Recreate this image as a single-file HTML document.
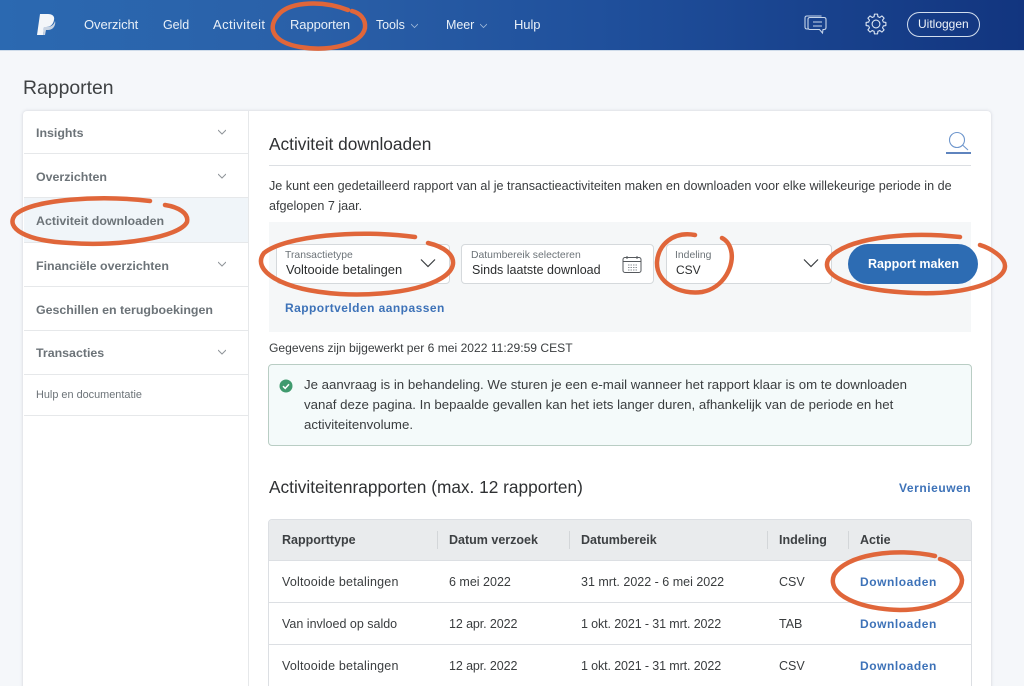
<!DOCTYPE html>
<html lang="nl"><head><meta charset="utf-8"><title>Rapporten</title>
<style>
*{box-sizing:border-box}
html,body{margin:0;padding:0;width:1024px;height:686px;overflow:hidden}
body{background:#f5f7fa;font-family:"Liberation Sans",sans-serif;color:#2c2e2f}
#w{position:absolute;left:0;top:0;width:1024px;height:686px;overflow:hidden;filter:blur(.3px)}
.t{position:absolute;white-space:nowrap;line-height:16px}
.b{position:absolute}
#top{left:0;top:0;width:1024px;height:51px;background:linear-gradient(90deg,#2b69b1 0%,#2a60a8 30%,#1f4f9b 60%,#12357f 100%);border-bottom:1px solid #cfdcea}
.n{color:#e9f0f8;font-size:13px;top:17px;letter-spacing:-.08px}
.c{width:7px;height:7px;position:absolute}
.s{color:#6c7378;font-size:12.4px;font-weight:bold}
.l{position:absolute;left:24px;width:225px;height:1px;background:#e6e8ea}
.fl{color:#6c7378;font-size:10.4px}
.fv{color:#2c2e2f;font-size:13px}
.f{position:absolute;top:244px;height:40px;background:#fff;border:1px solid #d5d9dc;border-radius:4px}
.p{font-size:12.5px;color:#3a3d3f}
.h{font-size:12.5px;font-weight:bold;color:#3d4043}
.a{font-size:12px;color:#3d72b8;letter-spacing:.55px;font-weight:bold}
.d{position:absolute;top:531px;width:1px;height:18px;background:#d3d6d9}
.r{position:absolute;left:269px;width:702px;height:1px;background:#dcdfe3}
</style></head><body><div id="w">
<div id="top" class="b"></div>
<svg class="b" style="left:36px;top:13px" width="21" height="24" viewBox="0 0 21 24"><path d="M4 1h8c4 0 7 2 6 6-1 5-4 7-8 7H8l-1 8H1z" fill="#f4f6f9"/><path d="M7 22l1-8h3c4 0 7-2 8-6 1 3-1 9-7 9h-2l-1 5z" fill="#c9d4e3"/></svg>
<span class="t n" style="left:84px">Overzicht</span>
<span class="t n" style="left:163px;font-size:12.500px">Geld</span>
<span class="t n" style="left:213px;letter-spacing:.4px">Activiteit</span>
<span class="t n" style="left:290px">Rapporten</span>
<span class="t n" style="left:376px;font-size:12.500px">Tools</span>
<svg class="c" style="left:411px;top:22px" viewBox="0 0 7 7"><path d="M0 2l3.500 3.500L7 2" fill="none" stroke="#9fb9da" stroke-width=".8"/></svg>
<span class="t n" style="left:446px;font-size:12.500px">Meer</span>
<svg class="c" style="left:480px;top:22px" viewBox="0 0 7 7"><path d="M0 2l3.500 3.500L7 2" fill="none" stroke="#9fb9da" stroke-width=".8"/></svg>
<span class="t n" style="left:514px">Hulp</span>
<svg class="b" style="left:804px;top:14px" width="23" height="21" viewBox="0 0 23 21" fill="none" stroke="#c7d6ea" stroke-width="1.100"><path d="M17 2.500V2H3Q1 2 1 4v9q0 2 2 2h1"/><path d="M6 3.500h14q2 0 2 2v8q0 2-2 2h-1l-.5 3.500-3-3.500H6q-2 0-2-2v-8q0-2 2-2z"/><path d="M9 8h9M9 12h9"/></svg>
<svg class="b" style="left:865px;top:13px" width="22" height="22" viewBox="-11 -11 22 22" fill="none" stroke="#dbe5f2" stroke-width="1.100" stroke-linejoin="round">
<defs><path id="g" d="M-2.870-6.930L-1.900-7.300-1.560-9.880H1.560L1.900-7.300 2.870-6.930"/></defs>
<circle r="3.900"/>
<use href="#g"/><use href="#g" transform="rotate(45)"/><use href="#g" transform="rotate(90)"/><use href="#g" transform="rotate(135)"/><use href="#g" transform="rotate(180)"/><use href="#g" transform="rotate(225)"/><use href="#g" transform="rotate(270)"/><use href="#g" transform="rotate(315)"/>
</svg>
<div class="b" style="left:907px;top:12px;width:73px;height:25px;border:1px solid #d2deee;border-radius:13px"></div>
<span class="t" style="left:918px;top:16px;font-size:12px;color:#eef3f9">Uitloggen</span>

<span class="t" style="left:23px;top:76px;font-size:19.400px;line-height:24px;color:#3f4244">Rapporten</span>
<div class="b" style="left:23px;top:111px;width:968px;height:590px;background:#fff;border-radius:4px;box-shadow:0 0 3px rgba(90,100,120,.25)"></div>
<div class="b" style="left:248px;top:111px;width:1px;height:575px;background:#e6e8ea"></div>
<div class="b" style="left:24px;top:198px;width:224px;height:44px;background:#f0f5f9"></div>
<span class="t s" style="left:36px;top:125px">Insights</span>
<span class="t s" style="left:36px;top:169px">Overzichten</span>
<span class="t s" style="left:36px;top:213px">Activiteit downloaden</span>
<span class="t s" style="left:36px;top:258px">Financiële overzichten</span>
<span class="t s" style="left:36px;top:302px">Geschillen en terugboekingen</span>
<span class="t s" style="left:36px;top:345px">Transacties</span>
<span class="t" style="left:36px;top:387px;font-size:10.900px;color:#6c7378">Hulp en documentatie</span>
<svg class="b" style="left:218px;top:128px" width="8" height="8" viewBox="0 0 8 8"><path d="M0 2l4 4 4-4" fill="none" stroke="#8f9499"/></svg>
<svg class="b" style="left:218px;top:172px" width="8" height="8" viewBox="0 0 8 8"><path d="M0 2l4 4 4-4" fill="none" stroke="#8f9499"/></svg>
<svg class="b" style="left:218px;top:260px" width="8" height="8" viewBox="0 0 8 8"><path d="M0 2l4 4 4-4" fill="none" stroke="#8f9499"/></svg>
<svg class="b" style="left:218px;top:348px" width="8" height="8" viewBox="0 0 8 8"><path d="M0 2l4 4 4-4" fill="none" stroke="#8f9499"/></svg>
<div class="l" style="top:153px"></div><div class="l" style="top:197px"></div><div class="l" style="top:242px"></div><div class="l" style="top:286px"></div><div class="l" style="top:330px"></div><div class="l" style="top:374px"></div><div class="l" style="top:415px"></div>

<span class="t" style="left:269px;top:134px;font-size:17.300px;line-height:20px;color:#2f3133">Activiteit downloaden</span>
<svg class="b" style="left:946px;top:130px" width="26" height="24" viewBox="0 0 26 24" fill="none"><circle cx="11" cy="10" r="7.500" stroke="#6f97cd" stroke-width="1.100"/><path d="M16.500 15l5.500 5" stroke="#6f97cd" stroke-width="1.100"/><path d="M0 23h25" stroke="#2a5ca8" stroke-width="1.500"/></svg>
<div class="r" style="top:165px"></div>
<span class="t p" style="left:269px;top:178px;font-size:12.600px">Je kunt een gedetailleerd rapport van al je transactieactiviteiten maken en downloaden voor elke willekeurige periode in de</span>
<span class="t p" style="left:269px;top:198px;font-size:12.600px">afgelopen 7 jaar.</span>
<div class="b" style="left:269px;top:222px;width:702px;height:110px;background:#f5f7f8"></div>
<div class="f" style="left:276px;width:174px"></div>
<span class="t fl" style="left:285px;top:248px">Transactietype</span>
<span class="t fv" style="left:286px;top:262px;font-size:12.900px">Voltooide betalingen</span>
<svg class="b" style="left:420px;top:258px" width="16" height="11" viewBox="0 0 16 11"><path d="M1 1.500l7 7 7-7" fill="none" stroke="#3a3d40" stroke-width="1.200"/></svg>
<div class="f" style="left:461px;width:193px"></div>
<span class="t fl" style="left:471px;top:248px">Datumbereik selecteren</span>
<span class="t fv" style="left:472px;top:262px;font-size:12.500px">Sinds laatste download</span>
<svg class="b" style="left:622px;top:255px" width="21" height="19" viewBox="0 0 21 19" fill="none" stroke="#55595d"><rect x="1" y="2.500" width="18" height="15" rx="2"/><path d="M1 6.500h18M5 1v3M15 1v3"/><path d="M6 10h9M6 12.500h9M6 15h9" stroke-dasharray="1.500 1" stroke="#8b9095"/></svg>
<div class="f" style="left:666px;width:166px"></div>
<span class="t fl" style="left:675px;top:248px">Indeling</span>
<span class="t fv" style="left:676px;top:262px;font-size:12px">CSV</span>
<svg class="b" style="left:803px;top:258px" width="16" height="11" viewBox="0 0 16 11"><path d="M1 1.500l7 7 7-7" fill="none" stroke="#3a3d40" stroke-width="1.200"/></svg>
<div class="b" style="left:848px;top:244px;width:130px;height:40px;background:#2d6cb3;border-radius:20px"></div>
<span class="t" style="left:868px;top:256px;font-size:12.500px;font-weight:bold;color:#fff">Rapport maken</span>
<span class="t a" style="left:285px;top:300px;letter-spacing:.45px">Rapportvelden aanpassen</span>
<span class="t p" style="left:269px;top:340px;font-size:12.100px">Gegevens zijn bijgewerkt per 6 mei 2022 11:29:59 CEST</span>
<div class="b" style="left:268px;top:364px;width:704px;height:82px;background:#f4fafa;border:1px solid #b9cdc4;border-radius:4px"></div>
<svg class="b" style="left:279px;top:379px" width="14" height="14" viewBox="0 0 14 14"><circle cx="7" cy="7" r="6.500" fill="#3f9a6e"/><path d="M4 7.200l2.200 2.200L10 5.200" fill="none" stroke="#fff" stroke-width="1.500"/></svg>
<span class="t p" style="left:304px;top:377px;font-size:13.250px">Je aanvraag is in behandeling. We sturen je een e-mail wanneer het rapport klaar is om te downloaden</span>
<span class="t p" style="left:304px;top:397px;font-size:13.250px">vanaf deze pagina. In bepaalde gevallen kan het iets langer duren, afhankelijk van de periode en het</span>
<span class="t p" style="left:304px;top:417px;font-size:13.250px">activiteitenvolume.</span>

<span class="t" style="left:269px;top:477px;font-size:17.270px;line-height:20px;color:#2f3133">Activiteitenrapporten (max. 12 rapporten)</span>
<span class="t a" style="left:899px;top:480px">Vernieuwen</span>

<div class="b" style="left:268px;top:519px;width:704px;height:190px;border:1px solid #dcdfe3;border-radius:4px 4px 0 0"></div>
<div class="b" style="left:269px;top:520px;width:702px;height:40px;background:#e9ebed;border-radius:3px 3px 0 0"></div>
<div class="r" style="top:560px"></div><div class="r" style="top:602px"></div><div class="r" style="top:644px"></div>
<div class="d" style="left:437px"></div><div class="d" style="left:569px"></div><div class="d" style="left:767px"></div><div class="d" style="left:848px"></div>
<span class="t h" style="left:282px;top:532px">Rapporttype</span>
<span class="t h" style="left:449px;top:532px">Datum verzoek</span>
<span class="t h" style="left:581px;top:532px">Datumbereik</span>
<span class="t h" style="left:779px;top:532px">Indeling</span>
<span class="t h" style="left:860px;top:532px">Actie</span>
<span class="t p" style="left:282px;top:574px;letter-spacing:.2px">Voltooide betalingen</span><span class="t p" style="left:449px;top:574px">6 mei 2022</span><span class="t p" style="left:581px;top:574px">31 mrt. 2022 - 6 mei 2022</span><span class="t p" style="left:779px;top:574px">CSV</span><span class="t a" style="left:860px;top:574px">Downloaden</span>
<span class="t p" style="left:282px;top:616px">Van invloed op saldo</span><span class="t p" style="left:449px;top:616px;letter-spacing:-.1px">12 apr. 2022</span><span class="t p" style="left:581px;top:616px;letter-spacing:-.12px">1 okt. 2021 - 31 mrt. 2022</span><span class="t p" style="left:779px;top:616px">TAB</span><span class="t a" style="left:860px;top:616px">Downloaden</span>
<span class="t p" style="left:282px;top:658px;letter-spacing:.2px">Voltooide betalingen</span><span class="t p" style="left:449px;top:658px;letter-spacing:-.1px">12 apr. 2022</span><span class="t p" style="left:581px;top:658px;letter-spacing:-.12px">1 okt. 2021 - 31 mrt. 2022</span><span class="t p" style="left:779px;top:658px">CSV</span><span class="t a" style="left:860px;top:658px">Downloaden</span>

<svg class="b" style="left:0;top:0" width="1024" height="686" viewBox="0 0 1024 686" fill="none" stroke="#e0663a" stroke-width="4.500" stroke-linecap="round">
<path d="M348 10C322 0 292 2 280 13C266 27 272 42 300 47C330 52 362 44 365 28C366 19 360 13 352 11"/>
<path d="M150 201C100 195 32 199 15 215C5 228 25 241 70 243C120 247 180 237 187 222C189 213 178 207 165 205"/>
<path d="M415 237C358 229 285 236 264 253C251 270 280 290 340 294C395 297 450 285 453 264C454 255 445 247 428 243"/>
<path d="M695 235C673 231 658 245 657 262C656 283 680 295 702 292C724 288 735 265 731 250C729 243 726 240 722 238"/>
<path d="M960 237C905 231 843 238 828 260C820 278 860 291 915 293C965 295 1005 282 1005 266C1005 257 990 248 980 245"/>
<path d="M935 556C895 547 845 555 834 575C826 595 860 609 900 610C935 610 962 596 962 580C961 570 950 562 940 559"/>
</svg>
</div></body></html>
